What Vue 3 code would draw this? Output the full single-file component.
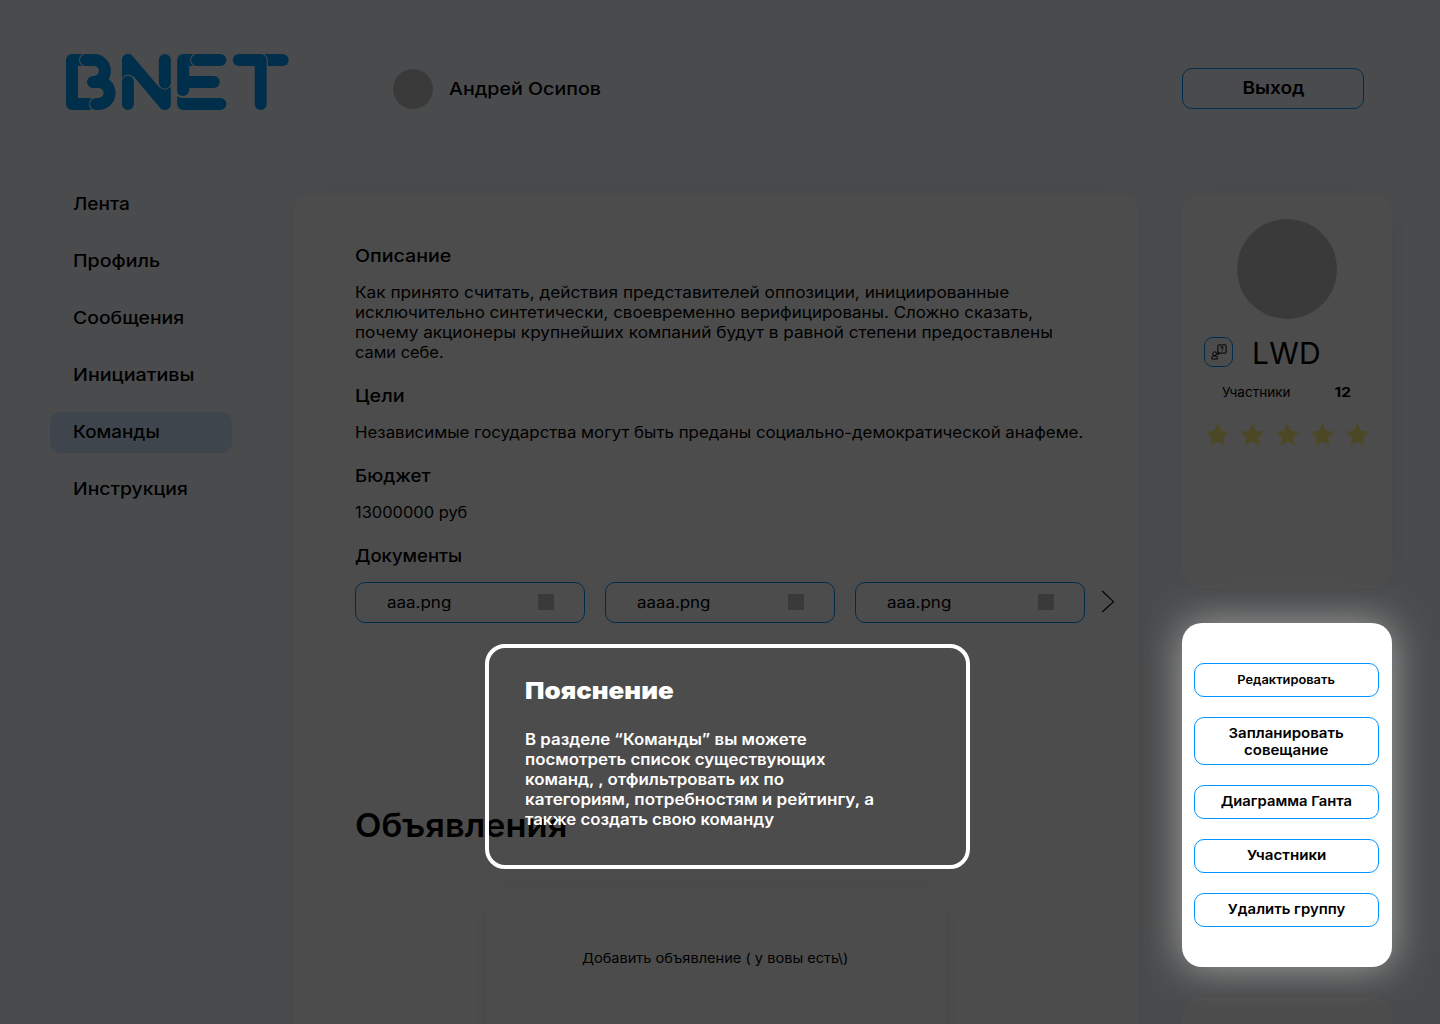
<script setup>
const nav = [
  { text: 'Лента', sx: 1.092 },
  { text: 'Профиль', sx: 1.12 },
  { text: 'Сообщения', sx: 1.107 },
  { text: 'Инициативы', sx: 1.125 },
  { text: 'Команды', sx: 1.076, active: true },
  { text: 'Инструкция', sx: 1.105 },
]

const sections = [
  {
    title: { text: 'Описание', sx: 1.122 },
    lines: [
      { text: 'Как принято считать, действия представителей оппозиции, инициированные', sx: 1.111 },
      { text: 'исключительно синтетически, своевременно верифицированы. Сложно сказать,', sx: 1.0934 },
      { text: 'почему акционеры крупнейших компаний будут в равной степени предоставлены', sx: 1.107 },
      { text: 'сами себе.', sx: 1.058 },
    ],
  },
  {
    title: { text: 'Цели', sx: 1.13 },
    lines: [{ text: 'Независимые государства могут быть преданы социально-демократической анафеме.', sx: 1.0868 }],
  },
  {
    title: { text: 'Бюджет', sx: 1.076 },
    lines: [{ text: '13000000 руб', sx: 1.06 }],
  },
]

const docs = [
  { text: 'aaa.png', sx: 1.095 },
  { text: 'aaaa.png', sx: 1.088 },
  { text: 'aaa.png', sx: 1.095 },
]

const actions = [
  { lines: [{ text: 'Редактировать', sx: 1.105 }], small: true },
  { lines: [{ text: 'Запланировать', sx: 1.105 }, { text: 'совещание', sx: 1.105 }] },
  { lines: [{ text: 'Диаграмма Ганта', sx: 1.088 }] },
  { lines: [{ text: 'Участники', sx: 1.115 }] },
  { lines: [{ text: 'Удалить группу', sx: 1.097 }] },
]

const hint = [
  { text: 'В разделе “Команды” вы можете', sx: 1.085 },
  { text: 'посмотреть список существующих', sx: 1.087 },
  { text: 'команд, , отфильтровать их по', sx: 1.088 },
  { text: 'категориям, потребностям и рейтингу, а', sx: 1.103 },
  { text: 'также создать свою команду', sx: 1.084 },
]

const stretch = (item) => ({ transform: `scaleX(${item.sx})` })
</script>

<template>
  <div class="page">
    <header class="header">
      <svg class="logo" viewBox="48 42 670 168" role="img" aria-label="BNET">
        <g class="fill">
          <path d="M48 60a18 18 0 0 1 18-18H108V78H84V174H124V210H66a18 18 0 0 1-18-18Z" />
          <path d="M216 60A18 18 0 0 1 248 48L328 142H363V192A18 18 0 0 1 331 204L250 108V120H216Z" />
          <path d="M382 167Q386 174 400 174H512a18 18 0 0 1 0 36H400a18 18 0 0 1-18-18Z" />
          <path d="M400 108H492a18 18 0 0 1 0 36H400Z" />
          <path d="M400 42H444V78H418V150a18 18 0 0 1-18 18Q382 168 382 154V60a18 18 0 0 1 18-18Z" />
          <path d="M640 42H699a18 18 0 0 1 0 36H640Z" />
        </g>
        <g class="gap">
          <path d="M108 60H132a33 33 0 0 1 0 66H129H146a33 33 0 0 1 0 66H138" />
          <path d="M234 125V192M345 60V128" />
          <path d="M442 60H512" />
          <path d="M567 60H633V192" />
        </g>
        <g class="bar">
          <path d="M108 60H132a33 33 0 0 1 0 66H129H146a33 33 0 0 1 0 66H138" />
          <path d="M234 125V192M345 60V128" />
          <path d="M442 60H512" />
          <path d="M567 60H633V192" />
        </g>
      </svg>
      <div class="user">
        <span class="avatar"></span>
        <span class="user-name">Андрей Осипов</span>
      </div>
      <button class="exit"><span>Выход</span></button>
    </header>

    <div class="body">
      <nav class="nav">
        <a v-for="n in nav" :key="n.text" class="nav-item" :class="{ active: n.active }">
          <span class="line" :style="stretch(n)">{{ n.text }}</span>
        </a>
      </nav>

      <main class="panel">
        <section v-for="s in sections" :key="s.title.text" class="section">
          <h3><span class="line" :style="stretch(s.title)">{{ s.title.text }}</span></h3>
          <p>
            <span v-for="l in s.lines" :key="l.text" class="line" :style="stretch(l)">{{ l.text }}</span>
          </p>
        </section>
        <section class="documents">
          <h3><span class="line docs-title">Документы</span></h3>
          <div class="docs">
            <div v-for="(d, i) in docs" :key="i" class="doc">
              <span class="line" :style="stretch(d)">{{ d.text }}</span>
              <i class="thumb"></i>
            </div>
            <svg class="next" viewBox="0 0 14 23"><path d="M1.2 1 12.5 11.7 1.2 22" /></svg>
          </div>
        </section>
        <h2><span class="line">Объявления</span></h2>
        <div class="post"><span>Добавить объявление ( у вовы есть\)</span></div>
      </main>

      <aside class="side">
        <div class="card team">
          <div class="team-photo"></div>
          <div class="team-head">
            <span class="ask">
              <svg viewBox="0 0 16 16">
                <rect x="6.9" y="0.9" width="8.2" height="8.2" rx="0.5" />
                <path d="M6.9 7.5V10.8L8.8 9.1" />
                <path d="M9.7 3.9Q9.8 2.6 11 2.6T12.2 3.8Q12.2 4.5 11 5.2V5.9M11 6.8V7.6" />
                <circle cx="3.6" cy="9.7" r="1.9" />
                <path d="M0.8 15V13.6Q0.8 12 2.4 12H4.8Q6.4 12 6.4 13.6V15Z" />
              </svg>
            </span>
            <span class="team-name">LWD</span>
          </div>
          <div class="members"><span>Участники</span><b>12</b></div>
          <div class="stars">
            <svg v-for="n in 5" :key="n" viewBox="0 0 23 23">
              <path d="M11.5 0 15.1 7.8 23 8.7 17.2 14.4 18.7 22.5 11.5 18.6 4.3 22.5 5.8 14.4 0 8.7 7.9 7.8Z" />
            </svg>
          </div>
        </div>
        <div class="card menu">
          <button v-for="(a, i) in actions" :key="i" :class="{ small: a.small, tall: a.lines.length > 1 }">
            <span v-for="l in a.lines" :key="l.text" :style="stretch(l)">{{ l.text }}</span>
          </button>
        </div>
        <div class="card extra"></div>
      </aside>
    </div>

    <div class="shade"></div>

    <div class="hint">
      <h4><span class="line">Пояснение</span></h4>
      <p>
        <span v-for="l in hint" :key="l.text" class="line" :style="stretch(l)">{{ l.text }}</span>
      </p>
    </div>
  </div>
</template>

<style>
body {
  margin: 0;
}
</style>

<style scoped>
.page {
  position: relative;
  box-sizing: border-box;
  width: 1440px;
  height: 1024px;
  overflow: hidden;
  background: #f8fcff;
  color: #000;
  font-family: Inter, "Noto Sans", sans-serif;
}
h2, h3, h4, p {
  margin: 0;
}
button {
  box-sizing: border-box;
  padding: 0;
  border: 1px solid #0094ff;
  border-radius: 10px;
  background: none;
  color: #000;
  font-family: inherit;
  font-weight: 600;
}
.line {
  display: block;
  width: max-content;
  white-space: nowrap;
  transform-origin: 0 50%;
}

.header {
  display: flex;
  align-items: flex-start;
  height: 193px;
  box-sizing: border-box;
  padding: 54px 76px 0 66px;
}
.logo {
  width: 223px;
  height: 56px;
}
.fill {
  fill: #009fff;
}
.gap, .bar {
  fill: none;
  stroke-linecap: round;
  stroke-linejoin: round;
}
.gap {
  stroke: #f8fcff;
  stroke-width: 42;
}
.bar {
  stroke: #009fff;
  stroke-width: 36;
}
.user {
  display: flex;
  align-items: center;
  gap: 16px;
  margin: 15px 0 0 104px;
  height: 40px;
}
.avatar {
  width: 40px;
  height: 40px;
  border-radius: 50%;
  background: #c4c4c4;
}
.user-name {
  font-size: 17.5px;
  font-weight: 500;
  line-height: 22px;
  transform: scaleX(1.122);
  transform-origin: 0 50%;
}
.exit {
  width: 182px;
  height: 41px;
  margin: 14px 0 0 auto;
  padding-bottom: 2px;
  font-size: 17.5px;
  line-height: 37px;
}
.exit span {
  display: inline-block;
  transform: scaleX(1.09);
}

.body {
  display: flex;
  align-items: flex-start;
  padding-left: 50px;
}
.nav {
  display: flex;
  flex-direction: column;
  gap: 16px;
  width: 182px;
  margin: -9px 61px 0 0;
}
.nav-item {
  box-sizing: border-box;
  height: 41px;
  padding-left: 23px;
  border-radius: 10px;
  font-size: 17.5px;
  font-weight: 500;
  line-height: 40px;
}
.nav-item.active {
  background: #cfe8fe;
}

.panel {
  box-sizing: border-box;
  width: 846px;
  height: 900px;
  padding: 52px 24px 0 62px;
  border-radius: 20px;
  background: #fff;
  box-shadow: 0 0 30px rgba(0, 0, 0, 0.06);
}
.section {
  margin-bottom: 22px;
}
h3 {
  height: 22px;
  font-size: 17.5px;
  font-weight: 500;
  line-height: 22px;
}
.section p {
  margin-top: 16px;
  font-size: 15.5px;
  line-height: 20px;
}
.docs-title {
  transform: scaleX(1.056);
}
.docs {
  display: flex;
  align-items: center;
  gap: 20px;
  margin-top: 15px;
}
.doc {
  display: flex;
  align-items: center;
  justify-content: space-between;
  box-sizing: border-box;
  width: 230px;
  height: 41px;
  padding: 0 30px 0 31px;
  border: 1px solid #0094ff;
  border-radius: 10px;
  font-size: 15.5px;
}
.thumb {
  width: 16px;
  height: 16px;
  margin-top: -1px;
  background: #c4c4c4;
}
.next {
  width: 14px;
  height: 23px;
  margin: -2px 0 0 -4px;
  fill: none;
  stroke: #000;
  stroke-width: 1.1;
}
h2 {
  margin-top: 182px;
  height: 40px;
  font-size: 33px;
  font-weight: 600;
  line-height: 40px;
}
h2 .line {
  transform: scaleX(1.044);
}
.post {
  box-sizing: border-box;
  width: 460px;
  height: 200px;
  margin: 44px 0 0 131px;
  padding-top: 59px;
  border-radius: 20px;
  box-shadow: 0 0 25px rgba(0, 0, 0, 0.06);
  font-size: 13.6px;
  line-height: 20px;
  text-align: center;
}
.post span {
  display: inline-block;
  transform: translateX(-1px) scaleX(1.073);
}

.side {
  display: flex;
  flex-direction: column;
  gap: 35px;
  margin-left: 43px;
}
.card {
  box-sizing: border-box;
  width: 210px;
  border-radius: 20px;
  background: #fff;
  box-shadow: 0 0 30px rgba(0, 0, 0, 0.06);
}
.team {
  height: 395px;
  padding-top: 26px;
}
.team-photo {
  width: 100px;
  height: 100px;
  margin: 0 auto;
  border-radius: 50%;
  background: #c4c4c4;
}
.team-head {
  display: flex;
  align-items: center;
  gap: 19px;
  height: 30px;
  margin: 18px 0 0 22px;
}
.ask {
  display: flex;
  align-items: center;
  justify-content: center;
  box-sizing: border-box;
  width: 29px;
  height: 30px;
  border: 1px solid #0094ff;
  border-radius: 9px;
}
.ask svg {
  width: 16px;
  height: 16px;
  margin: -1px 0 0 1px;
  fill: none;
  stroke: #000;
  stroke-width: 1;
}
.team-name {
  padding-top: 2px;
  font-size: 30px;
  letter-spacing: 0.2px;
  line-height: 36px;
}
.members {
  display: flex;
  justify-content: space-between;
  margin: 16px 41px 0 40px;
  font-size: 13px;
  line-height: 18px;
}
.members span {
  transform: scaleX(1.04);
  transform-origin: 0 50%;
}
.members b {
  transform: scaleX(1.18);
  transform-origin: 100% 50%;
}
.stars {
  display: flex;
  gap: 12px;
  margin: 22px 0 0 24px;
}
.stars svg {
  width: 23px;
  height: 23px;
  fill: #fff27c;
}
.menu {
  position: relative;
  z-index: 2;
  display: flex;
  flex-direction: column;
  gap: 20px;
  height: 344px;
  padding: 40px 13px 0 12px;
  box-shadow: 0 0 40px rgba(255, 255, 255, 0.5);
}
.menu button {
  display: flex;
  flex-direction: column;
  align-items: center;
  width: 185px;
  height: 34px;
  padding-top: 7px;
  font-size: 13.6px;
  line-height: 17px;
}
.menu .small {
  padding-top: 8px;
  font-size: 11.6px;
  line-height: 16px;
}
.menu .tall {
  height: 48px;
}
.extra {
  height: 100px;
  margin-top: -5px;
}

.shade {
  position: absolute;
  inset: 0;
  z-index: 1;
  background: rgba(0, 0, 0, 0.7);
}
.hint {
  position: absolute;
  z-index: 3;
  top: 644px;
  left: 485px;
  box-sizing: border-box;
  width: 485px;
  height: 225px;
  padding: 28px 36px;
  border: 4px solid #fff;
  border-radius: 20px;
  color: #fff;
}
h4 {
  height: 30px;
  font-size: 23.5px;
  font-weight: 900;
  line-height: 30px;
}
h4 .line {
  transform: scaleX(1.103);
}
.hint p {
  margin-top: 24px;
  font-size: 15.5px;
  font-weight: 600;
  line-height: 20px;
}
</style>
